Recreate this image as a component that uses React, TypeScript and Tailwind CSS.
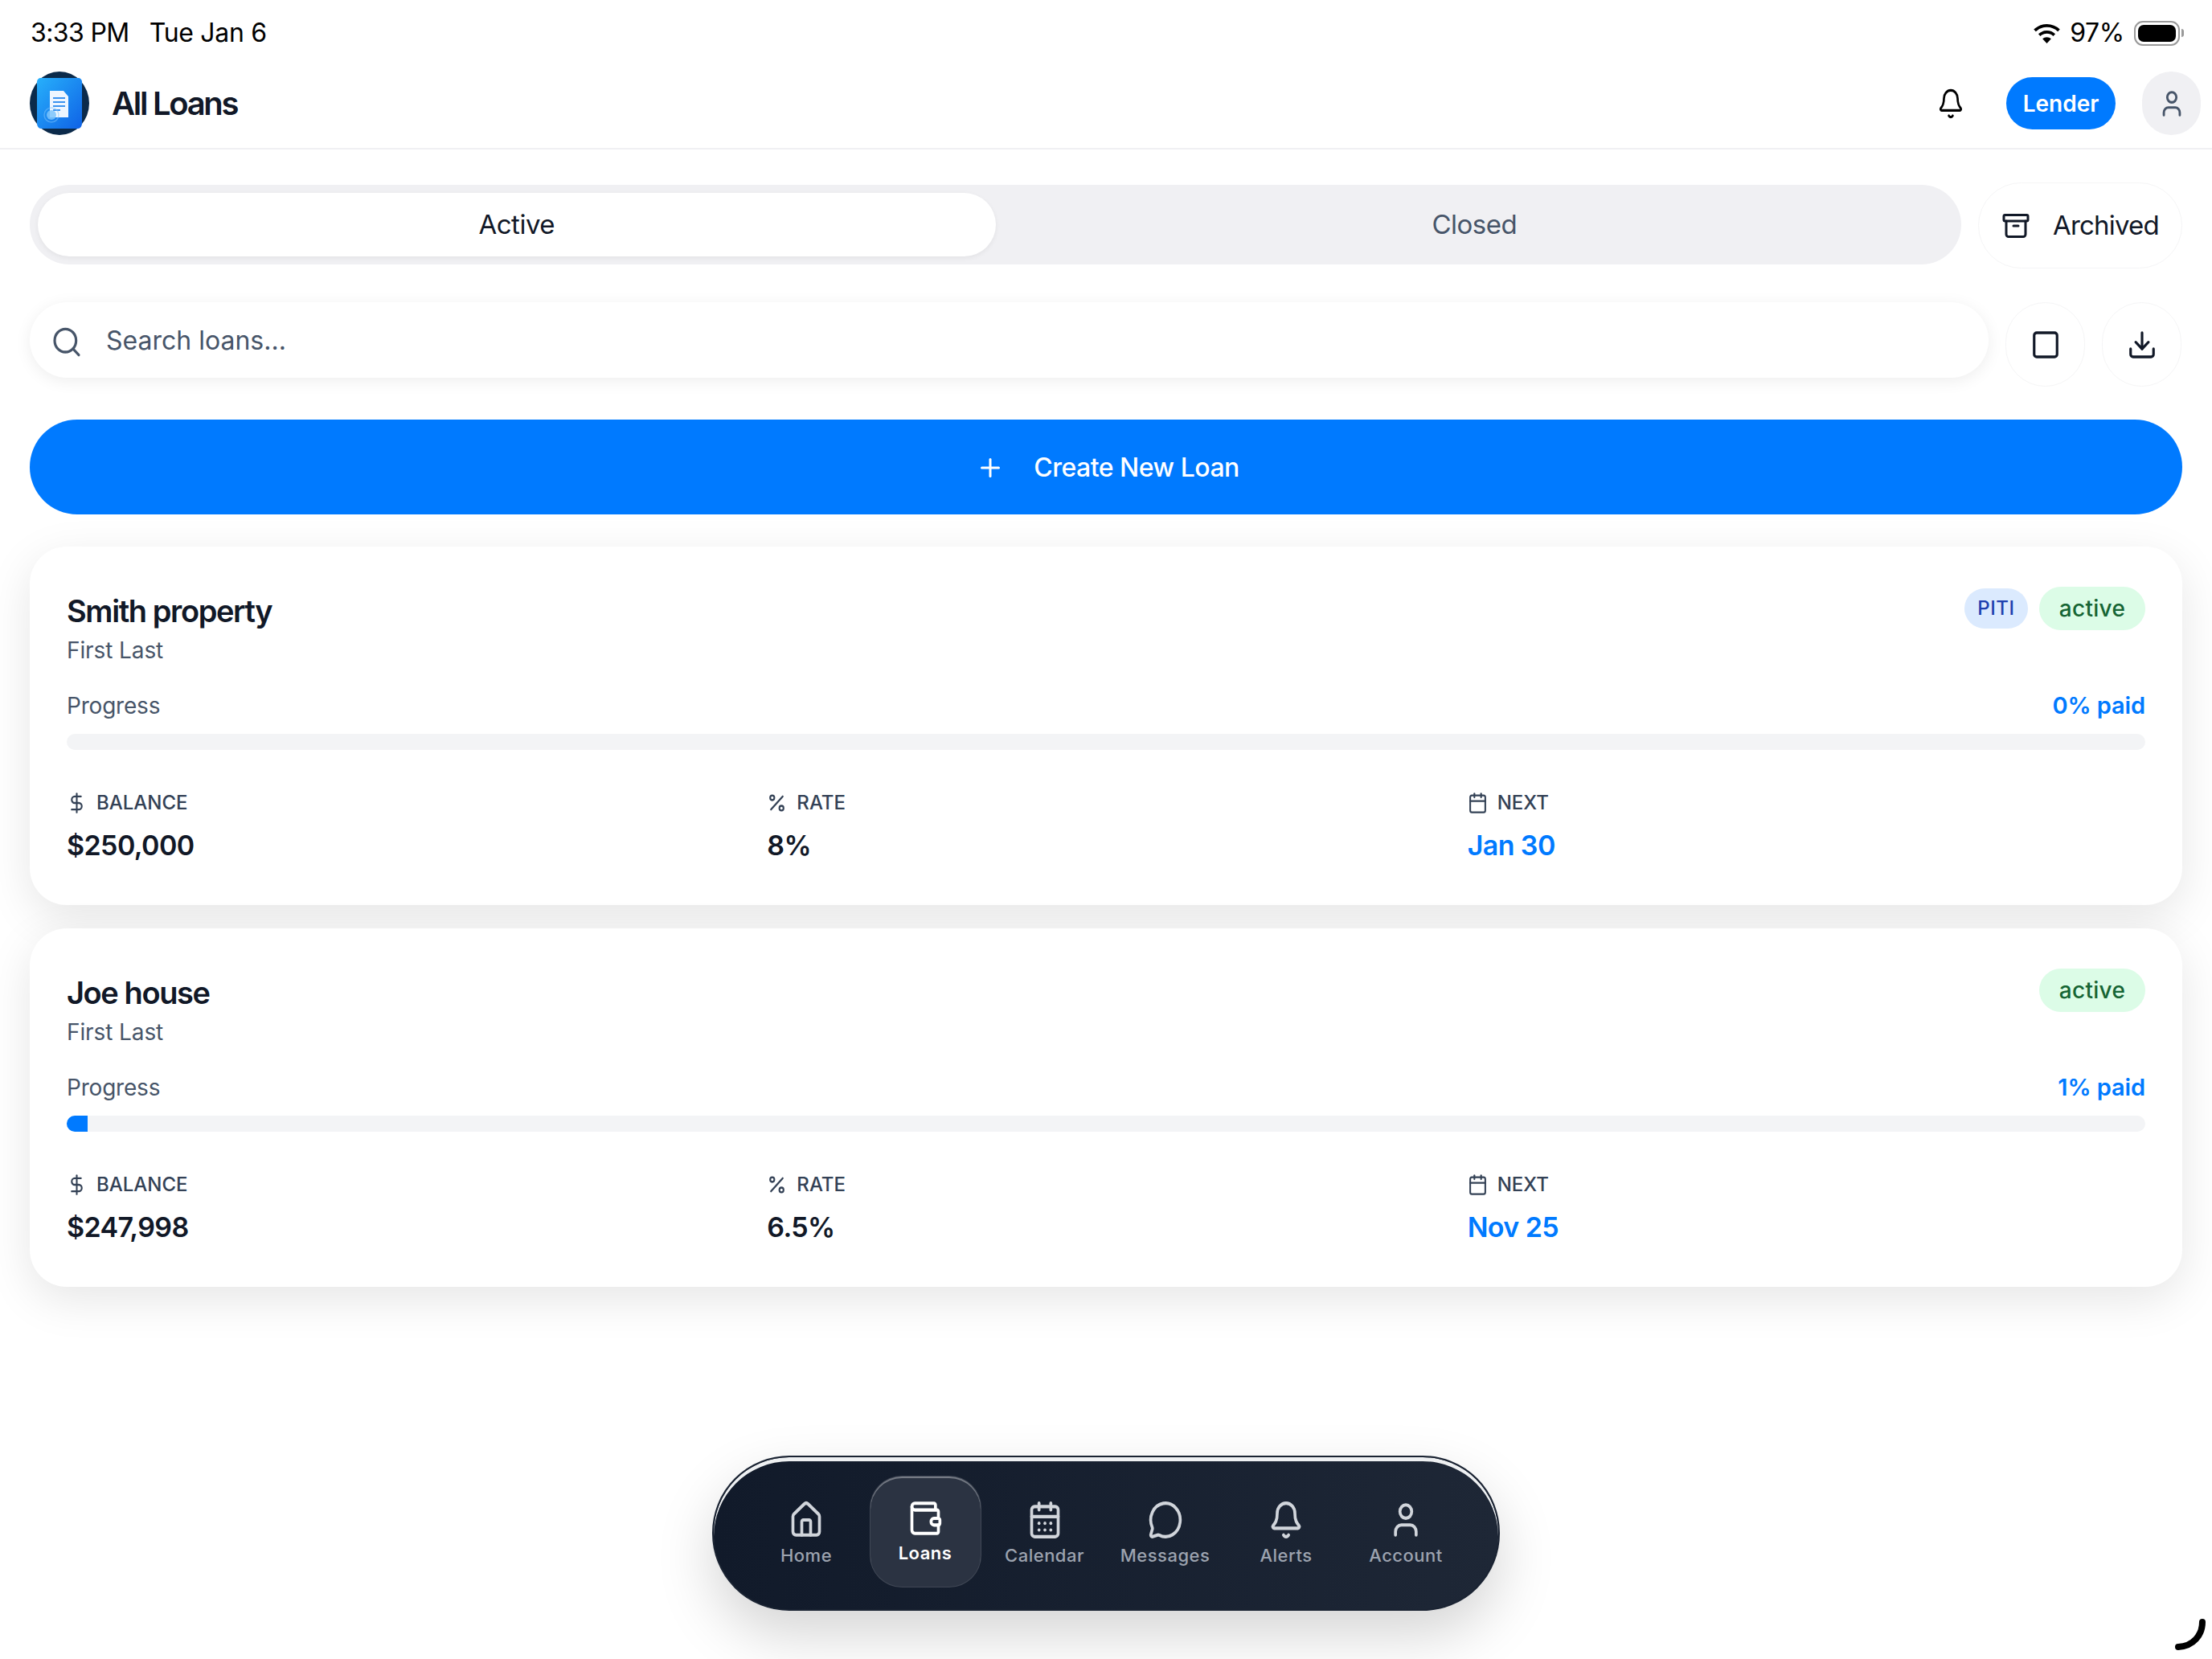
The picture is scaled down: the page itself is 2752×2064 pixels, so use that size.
import {
  Archive,
  Bell,
  Calendar,
  CalendarDays,
  DollarSign,
  Download,
  House,
  MessageCircle,
  Percent,
  Plus,
  Search,
  Square,
  User,
  Wallet,
} from 'lucide-react';

const navItems = [
  { label: 'Home', icon: House, width: 'w-[148px]' },
  { label: 'Loans', icon: Wallet, width: 'w-[148px]', active: true },
  { label: 'Calendar', icon: CalendarDays, width: 'w-[149px]' },
  { label: 'Messages', icon: MessageCircle, width: 'w-[151px]' },
  { label: 'Alerts', icon: Bell, width: 'w-[150px]' },
  { label: 'Account', icon: User, width: 'w-[148px]' },
];

const loans = [
  {
    title: 'Smith property',
    borrower: 'First Last',
    piti: true,
    paid: '0% paid',
    fill: 0,
    balance: '$250,000',
    rate: '8%',
    next: 'Jan 30',
  },
  {
    title: 'Joe house',
    borrower: 'First Last',
    piti: false,
    paid: '1% paid',
    fill: 1,
    balance: '$247,998',
    rate: '6.5%',
    next: 'Nov 25',
  },
];

function WifiIcon() {
  return (
    <svg width="33" height="25" viewBox="0 0 32 24" fill="none" stroke="#000">
      <path d="M1.5 8.5C9.5 0.7 22.5 0.7 30.5 8.5" strokeWidth="3.6" />
      <path d="M7 14C12 9.2 20 9.2 25 14" strokeWidth="3.6" />
      <path d="M16 24L10.8 18.6C13.7 16 18.3 16 21.2 18.6Z" fill="#000" stroke="none" />
    </svg>
  );
}

function Logo() {
  return (
    <svg width="74" height="79" viewBox="0 0 74 79" className="shrink-0">
      <defs>
        <linearGradient id="logoBg" x1="0" y1="0" x2="1" y2="1">
          <stop offset="0" stopColor="#27b0fb" />
          <stop offset="1" stopColor="#0f62e6" />
        </linearGradient>
      </defs>
      <ellipse cx="37" cy="39.5" rx="37" ry="39.5" fill="#0b2a4a" />
      <path d="M9 13C9 10 11 8 14 8H60C63 8 65 10 65 13V64C65 68 63 71 60 71H14C11 71 9 68 9 64Z" fill="url(#logoBg)" />
      <path d="M25 24H42L48 31V57H25Z" fill="#eef6ff" />
      <path d="M29 33H44M29 38H44M29 43H44M29 48H38" stroke="#3b93f0" strokeWidth="2" />
      <circle cx="27" cy="54" r="6" fill="#7cc4fb" opacity="0.85" />
      <circle cx="27" cy="54" r="9" fill="none" stroke="#7cc4fb" strokeWidth="1.5" opacity="0.5" />
    </svg>
  );
}

function Stat({
  icon: Icon,
  label,
  value,
  accent,
}: {
  icon: typeof Percent;
  label: string;
  value: string;
  accent?: boolean;
}) {
  return (
    <div>
      <div className="flex h-[42px] items-center gap-[12px] text-[#334155]">
        <Icon className="h-[28px] w-[25px]" strokeWidth={2} preserveAspectRatio="none" />
        <span className="text-[24px] font-medium uppercase tracking-[0px]">{label}</span>
      </div>
      <p
        className={`mt-[10px] h-[44px] text-[34px] font-semibold leading-[44px] tracking-[-0.6px] ${
          accent ? 'text-[#007aff]' : 'text-[#111827]'
        }`}
      >
        {value}
      </p>
    </div>
  );
}

function LoanCard({ loan }: { loan: (typeof loans)[number] }) {
  return (
    <div className="h-[446px] rounded-[46px] bg-white px-[46px] pt-[50px] shadow-[0_16px_56px_rgba(0,0,0,0.1)]">
      <div className="flex items-start justify-between">
        <div>
          <h2 className="h-[60px] text-[38px] font-semibold leading-[60px] tracking-[-1.4px] text-[#111827]">
            {loan.title}
          </h2>
          <p className="h-[38px] text-[28px] leading-[38px] tracking-[-0.1px] text-[#475569]">{loan.borrower}</p>
        </div>
        <div className="flex items-center gap-[14px]">
          {loan.piti && (
            <span className="flex h-[50px] w-[79px] items-center justify-center rounded-full bg-[#dbeafe] text-[24px] font-medium tracking-[0.6px] text-[#1e40af]">
              PITI
            </span>
          )}
          <span className="flex h-[54px] w-[132px] items-center justify-center rounded-full bg-[#dcfce7] text-[28px] font-medium tracking-[0.3px] text-[#166534]">
            active
          </span>
        </div>
      </div>
      <div className="mt-[29px] flex h-[42px] items-center justify-between">
        <span className="text-[28px] tracking-[-0.2px] text-[#475569]">Progress</span>
        <span className="text-[29px] font-semibold tracking-[-0.1px] text-[#007aff]">{loan.paid}</span>
      </div>
      <div className="mt-[14px] h-[20px] overflow-hidden rounded-full bg-[#f3f4f6]">
        <div className="h-full bg-[#007aff]" style={{ width: `${loan.fill}%` }} />
      </div>
      <div className="mt-[45px] grid grid-cols-3 gap-[28px]">
        <Stat icon={DollarSign} label="Balance" value={loan.balance} />
        <Stat icon={Percent} label="Rate" value={loan.rate} />
        <Stat icon={Calendar} label="Next" value={loan.next} accent />
      </div>
    </div>
  );
}

export default function App() {
  return (
    <div className="relative h-[2064px] w-[2752px] overflow-hidden bg-white font-['Inter',sans-serif]">
      <header className="h-[186px] border-b-2 border-[#f0f0f3]">
        <div className="flex h-[80px] items-center justify-between pl-[38px] pr-[35px] pt-[2px] text-[32px] text-black">
          <div className="flex items-center gap-[25px]">
            <span className="tracking-[-0.6px]">3:33 PM</span>
            <span className="tracking-[-0.3px]">Tue Jan 6</span>
          </div>
          <div className="flex items-center">
            <WifiIcon />
            <span className="ml-[12px] tracking-[-0.3px]">97%</span>
            <div className="ml-[12px] flex items-center">
              <div className="h-[31px] w-[57px] rounded-[11px] border-2 border-[#9a9a9a] p-[3px]">
                <div className="h-full w-full rounded-[7px] bg-black" />
              </div>
              <div className="ml-[2px] h-[10px] w-[3px] rounded-r-full bg-[#9a9a9a]" />
            </div>
          </div>
        </div>
        <div className="flex h-[104px] items-center justify-between pb-[7px] pl-[37px] pr-[14px]">
          <div className="flex items-center gap-[28px]">
            <Logo />
            <h1 className="text-[40px] font-semibold tracking-[-2.3px] text-[#111827]">All Loans</h1>
          </div>
          <div className="flex items-center">
            <Bell className="h-[40px] w-[34px] text-black" strokeWidth={1.9} preserveAspectRatio="none" />
            <button className="ml-[52px] flex h-[65px] w-[136px] items-center justify-center rounded-full bg-[#007aff] text-[28px] font-semibold text-white">
              Lender
            </button>
            <div className="ml-[33px] flex h-[79px] w-[73px] items-center justify-center rounded-full bg-[#f0f0f3]">
              <User className="h-[38px] w-[34px] text-[#475569]" strokeWidth={2} preserveAspectRatio="none" />
            </div>
          </div>
        </div>
      </header>

      <main className="px-[37px] pt-[41px]">
        <div className="flex h-[107px] items-start justify-between">
          <div className="mt-[3px] flex h-[99px] w-[2403px] rounded-full bg-[#f0f0f3] p-[10px]">
            <div className="flex flex-1 items-center justify-center rounded-full bg-white pt-[1px] text-[33px] tracking-[-0.5px] text-[#111827] shadow-[0_2px_6px_rgba(0,0,0,0.06)]">
              Active
            </div>
            <div className="flex flex-1 items-center justify-center pt-[1px] text-[33px] tracking-[-0.5px] text-[#475569]">
              Closed
            </div>
          </div>
          <button className="flex h-[107px] w-[254px] items-center justify-center gap-[28px] rounded-full border border-[#f5f5f6] bg-white text-[33px] tracking-[-0.8px] text-[#111827]">
            <Archive className="h-[36px] w-[36px]" strokeWidth={2} preserveAspectRatio="none" />
            Archived
          </button>
        </div>

        <div className="mt-[42px] flex h-[105px] items-start">
          <div className="flex h-[94px] w-[2437px] items-center rounded-full bg-white pl-[26px] shadow-[0_4px_20px_rgba(0,0,0,0.07)]">
            <Search className="mt-[5px] h-[43px] w-[40px] text-[#475569]" strokeWidth={1.9} preserveAspectRatio="none" />
            <span className="ml-[29px] pt-[2px] text-[32px] tracking-[0px] text-[#475569]">Search loans...</span>
          </div>
          <button className="ml-[21px] flex h-[105px] w-[99px] items-center justify-center rounded-full border border-[#f5f5f6] bg-white">
            <Square className="h-[40px] w-[38px] text-[#111827]" strokeWidth={2} preserveAspectRatio="none" />
          </button>
          <button className="ml-[21px] flex h-[105px] w-[99px] items-center justify-center rounded-full border border-[#f5f5f6] bg-white">
            <Download className="h-[40px] w-[38px] text-[#111827]" strokeWidth={2} preserveAspectRatio="none" />
          </button>
        </div>

        <button className="mt-[41px] flex h-[118px] w-full items-center justify-center gap-[36px] rounded-full bg-[#007aff] pl-[4px] pt-[2px] text-[32px] font-medium tracking-[-0.5px] text-white">
          <Plus className="h-[36px] w-[36px]" strokeWidth={2} />
          Create New Loan
        </button>

        <div className="mt-[40px] flex flex-col gap-[29px]">
          {loans.map((loan) => (
            <LoanCard key={loan.title} loan={loan} />
          ))}
        </div>
      </main>

      {/* floating tab bar */}
      <nav className="absolute left-[886px] top-[1811px] flex h-[193px] w-[980px] items-start justify-center rounded-[96px] border-2 border-[#1a2332] bg-gradient-to-r from-[#111a2a] to-[#1e2736] pt-[23px] shadow-[inset_0_5px_0_#eef0f2,0_30px_70px_rgba(0,0,0,0.17)]">
        {navItems.map((item) => (
          <div key={item.label} className={`flex justify-center ${item.width}`}>
            <div
              className={`flex h-[139px] w-[139px] flex-col items-center rounded-[40px] ${
                item.active
                  ? 'border border-white/10 bg-[#2b3342] pt-[27px] text-white shadow-[inset_0_2px_0_rgba(255,255,255,0.35)]'
                  : 'pt-[30px] text-[#d1d5db]'
              }`}
            >
              <item.icon className="h-[50px] w-[44px]" strokeWidth={2} preserveAspectRatio="none" />
              <span
                className={`text-[22px] tracking-[0.5px] ${
                  item.active ? 'mt-[2px] font-semibold text-white' : 'mt-[3px] font-medium text-[#9ca3af]'
                }`}
              >
                {item.label}
              </span>
            </div>
          </div>
        ))}
      </nav>

      {/* corner arc from the device screen */}
      <svg className="absolute left-[2705px] top-[2013px]" width="40" height="41" viewBox="0 0 40 41" fill="none">
        <path d="M35 5C35 21 24 35 5 36" stroke="#000" strokeWidth="8" strokeLinecap="round" />
      </svg>
    </div>
  );
}
